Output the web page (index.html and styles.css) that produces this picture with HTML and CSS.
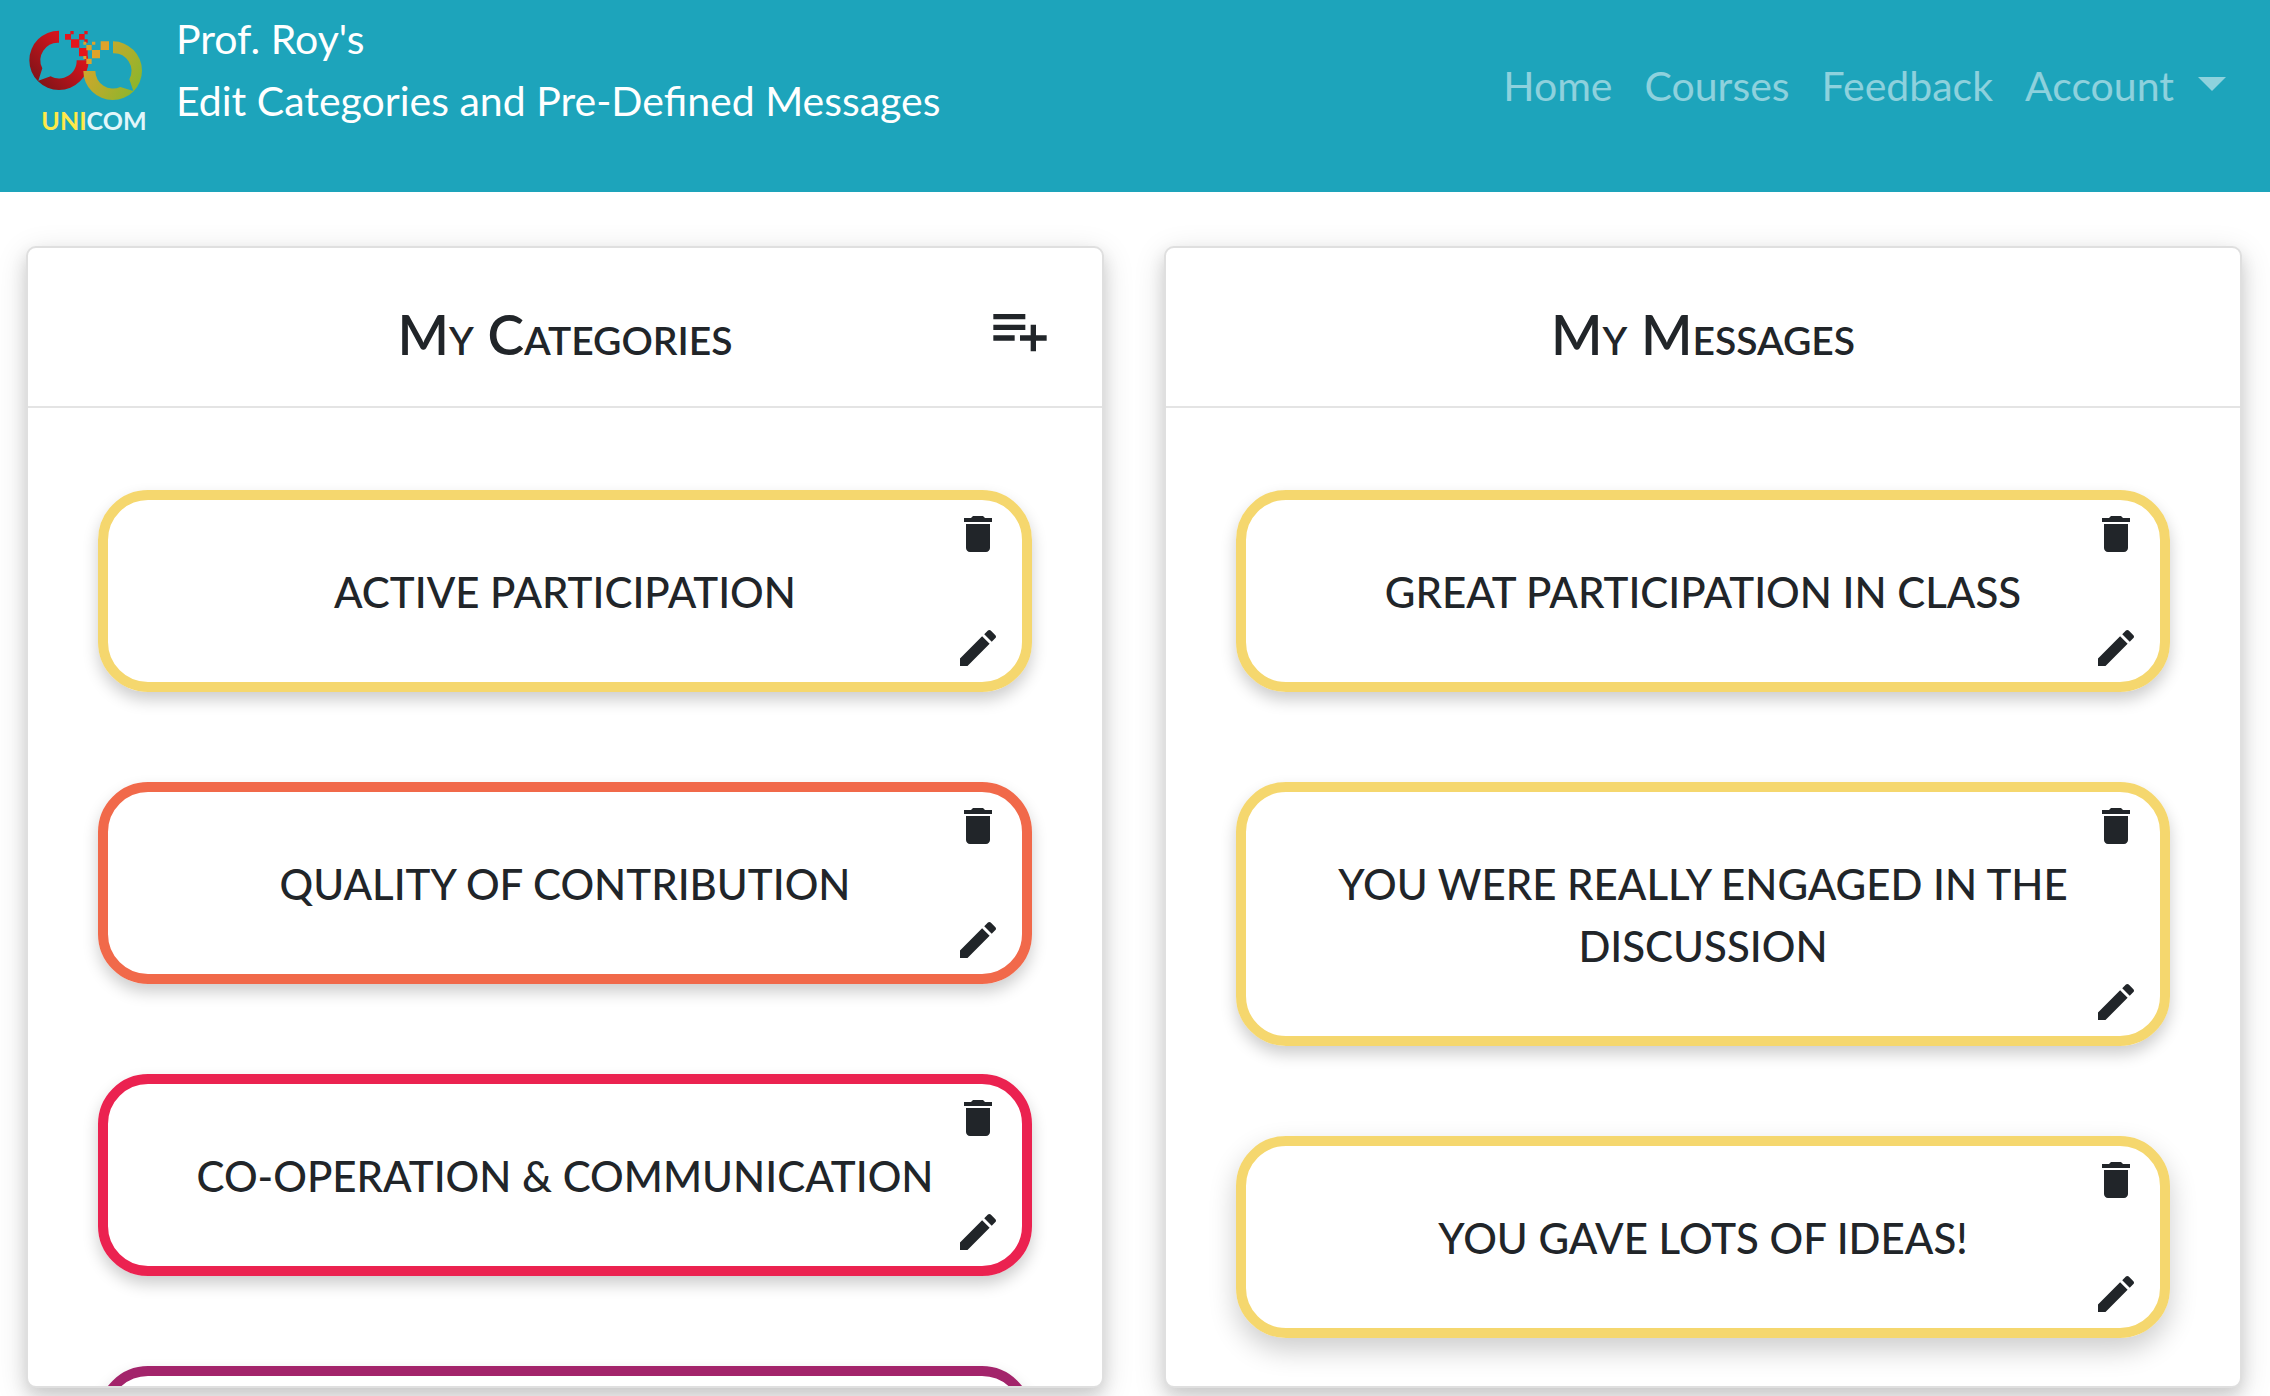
FILE: index.html
```html
<!DOCTYPE html>
<html lang="en">
<head>
<meta charset="utf-8">
<meta name="viewport" content="width=device-width, initial-scale=1">
<title>Edit Categories and Pre-Defined Messages</title>
<link rel="stylesheet" href="styles.css">
</head>
<body>
<svg class="sprite" aria-hidden="true">
  <symbol id="trash" viewBox="0 0 24 24"><path d="M6 19c0 1.1.9 2 2 2h8c1.1 0 2-.9 2-2V7H6v12zM19 4h-3.500l-1-1h-5l-1 1H5v2h14V4z"/></symbol>
  <symbol id="pencil" viewBox="0 0 24 24"><path d="M20.710 7.040c.39-.39.39-1.040 0-1.410l-2.340-2.340c-.37-.39-1.020-.39-1.410 0l-1.840 1.830 3.750 3.750M3 17.250V21h3.750L17.810 9.930l-3.750-3.750L3 17.250z"/></symbol>
</svg>
<header class="navbar">
  <a class="brand" href="#" aria-label="Unicom home">
    <svg class="logo" viewBox="0 0 360 330" aria-hidden="true">
      <defs>
        <linearGradient id="red" x1="1" y1="0" x2="0" y2="1"><stop offset="0.300" stop-color="#d4141c"/><stop offset="1" stop-color="#6e1418"/></linearGradient>
        <linearGradient id="lime" x1="0" y1="0" x2="1" y2="0.600"><stop offset="0.200" stop-color="#d2a62c"/><stop offset="1" stop-color="#8fb52c"/></linearGradient>
      </defs>
      <path fill="url(#red)" d="M99 11A89 89 0 1 0 188 100H152A53 53 0 0 1 74 148L37 161L49 124A53 53 0 0 1 99 47Z"/>
      <path fill="url(#lime)" d="M261 43A88 88 0 1 1 172 132H208A53 53 0 0 0 283 180L322 192L310 157A53 53 0 0 0 261 79Z"/>
      <path fill="#e3151c" d="M117 21h18v17h-18zM133 12h10v10h-10zM135 37h25v25h-25zM159 21h17v17h-17zM175 12h10v10h-10zM175 37h10v10h-10zM159 63h26v25h-26zM176 88h10v12h-10z"/>
      <path fill="#dfa32a" d="M172 44h9v9h-9zM181 54h16v16h-16zM198 44h10v9h-10zM224 43h25v26h-25zM198 69h24v25h-24zM181 95h16v16h-16zM172 87h9v9h-9z"/>
      <text class="logo-text" x="46" y="308"><tspan class="logo-uni">UNI</tspan><tspan class="logo-com">COM</tspan></text>
    </svg>
  </a>
  <div class="page-name"><div>Prof. Roy's</div><div>Edit Categories and Pre-Defined Messages</div></div>
  <nav class="links">
    <a href="#">Home</a>
    <a href="#">Courses</a>
    <a href="#">Feedback</a>
    <a class="account" href="#">Account<span class="caret"></span></a>
  </nav>
</header>
<main class="board">
  <section class="panel">
    <div class="panel-head">
      <h1>My Categories</h1>
      <button class="add" aria-label="Add category"><svg viewBox="0 0 24 24"><path d="M14 10H2v2h12v-2zm0-4H2v2h12V6zm4 8v-4h-2v4h-4v2h4v4h2v-4h4v-2h-4zM2 16h8v-2H2v2z"/></svg></button>
    </div>
    <ul class="list">
      <li class="pill yellow"><span>ACTIVE PARTICIPATION</span><button class="tool delete" aria-label="Delete"><svg><use href="#trash"/></svg></button><button class="tool edit" aria-label="Edit"><svg><use href="#pencil"/></svg></button></li>
      <li class="pill orange"><span>QUALITY OF CONTRIBUTION</span><button class="tool delete" aria-label="Delete"><svg><use href="#trash"/></svg></button><button class="tool edit" aria-label="Edit"><svg><use href="#pencil"/></svg></button></li>
      <li class="pill red"><span>CO-OPERATION &amp; COMMUNICATION</span><button class="tool delete" aria-label="Delete"><svg><use href="#trash"/></svg></button><button class="tool edit" aria-label="Edit"><svg><use href="#pencil"/></svg></button></li>
      <li class="pill purple"></li>
    </ul>
  </section>
  <section class="panel">
    <div class="panel-head"><h1>My Messages</h1></div>
    <ul class="list">
      <li class="pill yellow"><span>GREAT PARTICIPATION IN CLASS</span><button class="tool delete" aria-label="Delete"><svg><use href="#trash"/></svg></button><button class="tool edit" aria-label="Edit"><svg><use href="#pencil"/></svg></button></li>
      <li class="pill yellow"><span>YOU WERE REALLY ENGAGED IN THE DISCUSSION</span><button class="tool delete" aria-label="Delete"><svg><use href="#trash"/></svg></button><button class="tool edit" aria-label="Edit"><svg><use href="#pencil"/></svg></button></li>
      <li class="pill yellow raised"><span>YOU GAVE LOTS OF IDEAS!</span><button class="tool delete" aria-label="Delete"><svg><use href="#trash"/></svg></button><button class="tool edit" aria-label="Edit"><svg><use href="#pencil"/></svg></button></li>
    </ul>
  </section>
</main>
</body>
</html>
```
FILE: styles.css
```css
* { box-sizing: border-box; }

body {
  margin: 0;
  height: 100vh;
  display: flex;
  flex-direction: column;
  overflow: hidden;
  background: #fff;
  color: #212529;
  font-family: Lato, sans-serif;
  font-size: 42px;
  line-height: 62px;
}

.sprite { position: absolute; width: 0; height: 0; }

button {
  display: block;
  padding: 0;
  border: 0;
  background: none;
  color: inherit;
  cursor: pointer;
}

button svg { display: block; width: 100%; height: 100%; fill: currentColor; }

.navbar {
  flex: none;
  display: flex;
  align-items: flex-start;
  height: 192px;
  padding: 8px 44px 0 26px;
  background: #1da4bb;
  color: #fff;
  font-size: 41px;
}

.brand { margin: 19px 30px 0 0; }
.logo { display: block; width: 120px; height: 110px; }
.logo-text { font-size: 75px; font-weight: 700; }
.logo-uni { fill: #ffe94a; }
.logo-com { fill: #e2f6fa; }

.links { display: flex; gap: 32px; margin: 47px 0 0 auto; }
.links a { color: rgba(255, 255, 255, 0.5); text-decoration: none; }
.account { display: flex; gap: 24px; }
.caret {
  margin-top: 22px;
  height: 14px;
  border: 14px solid transparent;
  border-top-color: currentColor;
  border-bottom: 0;
}

.board {
  flex: 1;
  min-height: 0;
  display: grid;
  grid-template-columns: 1fr 1fr;
  gap: 60px;
  padding: 54px 28px 8px 26px;
}

.panel {
  min-height: 0;
  display: flex;
  flex-direction: column;
  border: 2px solid #dfdfdf;
  border-radius: 10px;
  background: #fff;
  box-shadow: 0 8px 16px rgba(0, 0, 0, 0.12), 0 8px 32px rgba(0, 0, 0, 0.14);
}

.panel-head {
  position: relative;
  flex: none;
  padding: 56px 50px 42px;
  border-bottom: 2px solid #e4e4e4;
}

.panel-head h1 {
  margin: 0;
  font-size: 55px;
  line-height: 60px;
  font-weight: 600;
  font-variant: small-caps;
  text-align: center;
}

.add { position: absolute; top: 50px; right: 50px; width: 64px; height: 64px; }

.list {
  flex: 1;
  min-height: 0;
  display: flex;
  flex-direction: column;
  gap: 90px;
  margin: 0;
  padding: 82px 70px;
  overflow-y: auto;
  scrollbar-width: none;
  list-style: none;
}

.pill {
  position: relative;
  flex: none;
  min-height: 202px;
  padding: 61px 70px 59px;
  border: 10px solid;
  border-radius: 50px;
  box-shadow: 0 8px 16px rgba(0, 0, 0, 0.2);
  font-weight: 500;
  text-align: center;
}

.pill.raised { box-shadow: 0 12px 28px rgba(0, 0, 0, 0.2); }
.yellow { border-color: #f5d76e; }
.orange { border-color: #f1694a; }
.red { border-color: #eb2250; }
.purple { border-color: #a3246b; }

.tool { position: absolute; right: 20px; width: 48px; height: 48px; }
.delete { top: 10px; }
.edit { bottom: 10px; }
```
